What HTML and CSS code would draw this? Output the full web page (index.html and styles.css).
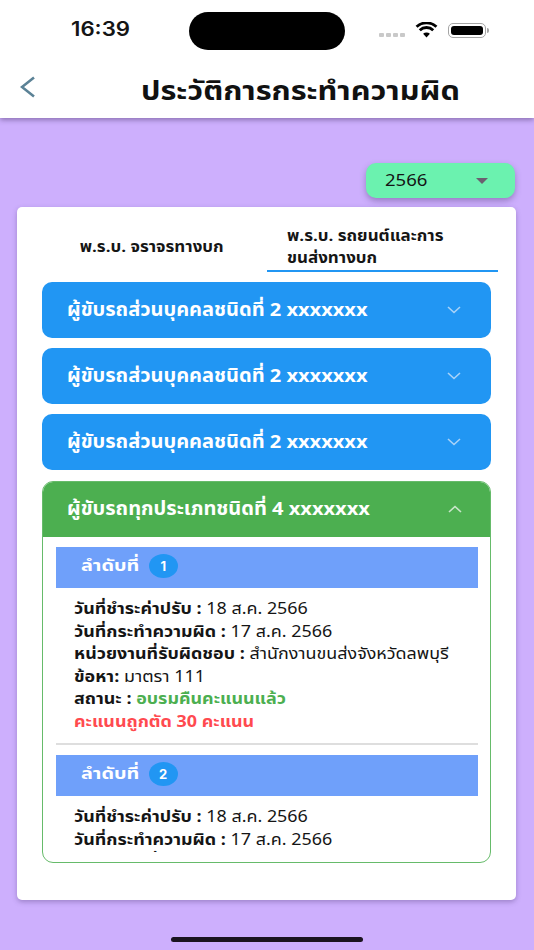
FILE: index.html
```html
<!DOCTYPE html>
<html lang="th">
<head>
<meta charset="utf-8">
<title>ประวัติการกระทำความผิด</title>
<link rel="stylesheet" href="styles.css">
</head>
<body>
<div class="phone">
  <header class="top">
    <div class="status">
      <span class="time"><span class="time-text">16:39</span></span>
      <span class="island"></span>
      <span class="status-icons">
        <span class="signal"><i></i><i></i><i></i><i></i></span>
        <svg class="wifi" width="23" height="16" viewBox="0 0 24 17"><path d="M12 16.5l-3.6-4a5.2 5.2 0 0 1 7.2 0z M5.9 9.9L3.8 7.6a12 12 0 0 1 16.4 0l-2.1 2.3a9 9 0 0 0-12.2 0z M2.5 6.2L.4 4a17 17 0 0 1 23.2 0l-2.1 2.2a14 14 0 0 0-19 0z" fill="#000"/></svg>
        <span class="battery"><span class="battery-fill"></span></span><span class="battery-tip"></span>
      </span>
    </div>
    <div class="nav">
      <svg class="back" width="16" height="22" viewBox="0 0 16 22"><path d="M14 1.5L2 11l12 9.5" fill="none" stroke="#5b8296" stroke-width="2.6"/></svg>
      <h1 class="title">ประวัติการกระทำความผิด</h1>
    </div>
  </header>
  <main class="content">
    <div class="year-row">
      <div class="year"><span class="year-text">2566</span><span class="caret"></span></div>
    </div>
    <section class="card">
      <div class="tabs">
        <div class="tab"><span class="tab-text">พ.ร.บ. จราจรทางบก</span></div>
        <div class="tab tab-active"><span class="tab-text tab-left">พ.ร.บ. รถยนต์และการ<br>ขนส่งทางบก</span></div>
      </div>
      <div class="acc-list">
        <div class="acc-head acc-blue"><span class="acc-text">ผู้ขับรถส่วนบุคคลชนิดที่ 2 xxxxxxx</span>
          <svg class="chev" width="14" height="8" viewBox="0 0 14 8"><path d="M1 1l6 5.5L13 1" fill="none" stroke="#a9d3f8" stroke-width="1.6"/></svg></div>
        <div class="acc-head acc-blue"><span class="acc-text">ผู้ขับรถส่วนบุคคลชนิดที่ 2 xxxxxxx</span>
          <svg class="chev" width="14" height="8" viewBox="0 0 14 8"><path d="M1 1l6 5.5L13 1" fill="none" stroke="#a9d3f8" stroke-width="1.6"/></svg></div>
        <div class="acc-head acc-blue"><span class="acc-text">ผู้ขับรถส่วนบุคคลชนิดที่ 2 xxxxxxx</span>
          <svg class="chev" width="14" height="8" viewBox="0 0 14 8"><path d="M1 1l6 5.5L13 1" fill="none" stroke="#a9d3f8" stroke-width="1.6"/></svg></div>
        <div class="acc-open">
          <div class="acc-head acc-green"><span class="acc-text">ผู้ขับรถทุกประเภทชนิดที่ 4 xxxxxxx</span>
            <svg class="chev" width="14" height="8" viewBox="0 0 14 8"><path d="M1 7l6-5.5L13 7" fill="none" stroke="#c9e6ca" stroke-width="1.6"/></svg></div>
          <div class="acc-body">
            <div class="seq"><span class="seq-text">ลำดับที่</span><b class="badge">1</b></div>
            <div class="rows">
              <p><b>วันที่ชำระค่าปรับ :</b> 18 ส.ค. 2566</p>
              <p><b>วันที่กระทำความผิด :</b> 17 ส.ค. 2566</p>
              <p><b>หน่วยงานที่รับผิดชอบ :</b> สำนักงานขนส่งจังหวัดลพบุรี</p>
              <p><b>ข้อหา:</b> มาตรา 111</p>
              <p><b>สถานะ :</b> <b class="ok">อบรมคืนคะแนนแล้ว</b></p>
              <p><b class="bad">คะแนนถูกตัด 30 คะแนน</b></p>
            </div>
            <hr class="rule">
            <div class="seq"><span class="seq-text">ลำดับที่</span><b class="badge">2</b></div>
            <div class="rows">
              <p><b>วันที่ชำระค่าปรับ :</b> 18 ส.ค. 2566</p>
              <p><b>วันที่กระทำความผิด :</b> 17 ส.ค. 2566</p>
              <p><b>หน่วยงานที่รับผิดชอบ :</b> สำนักงานขนส่งจังหวัดลพบุรี</p>
            </div>
          </div>
        </div>
      </div>
    </section>
  </main>
  <div class="home"></div>
</div>
</body>
</html>
```
FILE: styles.css
```css
* { box-sizing: border-box; }
html, body { margin: 0; padding: 0; }
body { width: 534px; height: 950px; overflow: hidden; font-family: "Noto Sans Thai", "Noto Sans", "DejaVu Sans", sans-serif; color: #151515; }
.phone { width: 534px; height: 950px; background: #cdaffd; display: flex; flex-direction: column; position: relative; }
.top { height: 118px; background: #fff; box-shadow: 0 2px 5px rgba(60,40,90,.45); position: relative; flex: none; }
.status { height: 60px; display: flex; align-items: center; padding: 0 46px 0 71px; }
.time { width: 118px; flex: none; }
.time-text { display: inline-block; font-size: 19.5px; font-weight: 600; font-family: "Inter", sans-serif; transform: scaleX(1.14); transform-origin: left center; }
.island { width: 156px; height: 38px; background: #000; border-radius: 19px; margin-top: 1px; flex: none; }
.status-icons { display: flex; align-items: center; margin-left: 34px; }
.signal { display: flex; gap: 2px; margin-top: 9px; margin-right: 10px; }
.signal i { width: 5px; height: 4px; background: #c9c9c9; border-radius: 1px; }
.wifi { margin-right: 10px; }
.battery { width: 38px; height: 15px; border: 1px solid #a5a5a5; border-radius: 5px; padding: 2px; display: block; }
.battery-fill { display: block; width: 100%; height: 100%; background: #000; border-radius: 3px; }
.battery-tip { width: 2px; height: 5px; background: #a5a5a5; border-radius: 0 2px 2px 0; margin-left: 1px; }
.nav { height: 58px; display: flex; align-items: center; padding-left: 20px; }
.back { flex: none; margin-top: -4px; }
.title { margin: 7px 0 0 105px; font-size: 26px; font-weight: 700; color: #111; white-space: nowrap; line-height: 1.3; transform: scaleX(1.18); transform-origin: left center; }
.content { flex: 1; padding: 45px 18px 0 17px; display: flex; flex-direction: column; }
.year-row { display: flex; justify-content: flex-end; padding-right: 1px; }
.year { width: 149px; height: 35px; background: #6bf2af; border-radius: 10px; box-shadow: 0 3px 6px rgba(70,50,110,.4); display: flex; align-items: center; justify-content: space-between; padding: 0 27px 0 19px; font-size: 16px; }
.year-text { display: inline-block; transform: scaleX(1.16); transform-origin: left center; }
.caret { width: 0; height: 0; border-left: 6px solid transparent; border-right: 6px solid transparent; border-top: 6px solid #6b6070; }
.card { margin-top: 9px; height: 693px; background: #fff; border-radius: 5px; box-shadow: 0 2px 5px rgba(70,50,110,.35); padding: 17px 25px 0; }
.tabs { display: grid; grid-template-columns: 225px 231px; height: 48px; margin-bottom: 10px; font-size: 15px; font-weight: 700; line-height: 22px; }
.tab { display: flex; align-items: center; justify-content: center; padding-right: 6px; }
.tab-text { display: inline-block; transform: scaleX(1.13); white-space: nowrap; }
.tab-left { transform-origin: left top; }
.tab-active { display: block; padding: 2px 0 0 20px; border-bottom: 2px solid #2196f3; }
.acc-list { display: flex; flex-direction: column; gap: 10px; }
.acc-head { height: 56px; border-radius: 10px; display: flex; align-items: center; justify-content: space-between; padding: 0 30px 0 25px; color: #fff; font-size: 18.5px; font-weight: 700; }
.acc-text { display: inline-block; transform: scaleX(1.083); transform-origin: left center; white-space: nowrap; }
.acc-blue { background: #2196f3; }
.acc-green { background: #4caf50; border-radius: 9px 9px 0 0; margin: -1.5px -1.5px 0; }
.acc-open { height: 382px; border: 1.5px solid #66bb6a; border-radius: 11px; overflow: hidden; margin-top: 1px; }
.acc-body { padding: 10.5px 12.5px 0 12.5px; height: 315px; overflow: hidden; }
.seq { height: 41px; background: #6fa0fa; display: flex; align-items: center; padding: 0 0 4px 25px; color: #fff; font-size: 16.5px; font-weight: 700; }
.seq-text { display: inline-block; transform: scaleX(1.2); transform-origin: left center; margin-right: 10.6px; }
.badge { width: 29px; height: 24px; border-radius: 50%; background: #2196f3; color: #fff; margin-left: 9px; font-size: 13px; font-weight: 700; display: flex; align-items: center; justify-content: center; font-family: "Inter", sans-serif; }
.rows { padding: 11px 0 0 18.5px; font-size: 15.5px; line-height: 22.5px; }
.rows p { margin: 0; white-space: nowrap; transform: scaleX(1.155); transform-origin: left center; }
.rows b { font-weight: 700; }
.ok { color: #4caf50; }
.bad { color: #ff4a4f; }
.rule { border: 0; height: 2px; background: #dedede; margin: 9px 0 10px; }
.home { position: absolute; left: 171px; top: 937px; width: 192px; height: 5px; border-radius: 3px; background: #1b1420; }
```
